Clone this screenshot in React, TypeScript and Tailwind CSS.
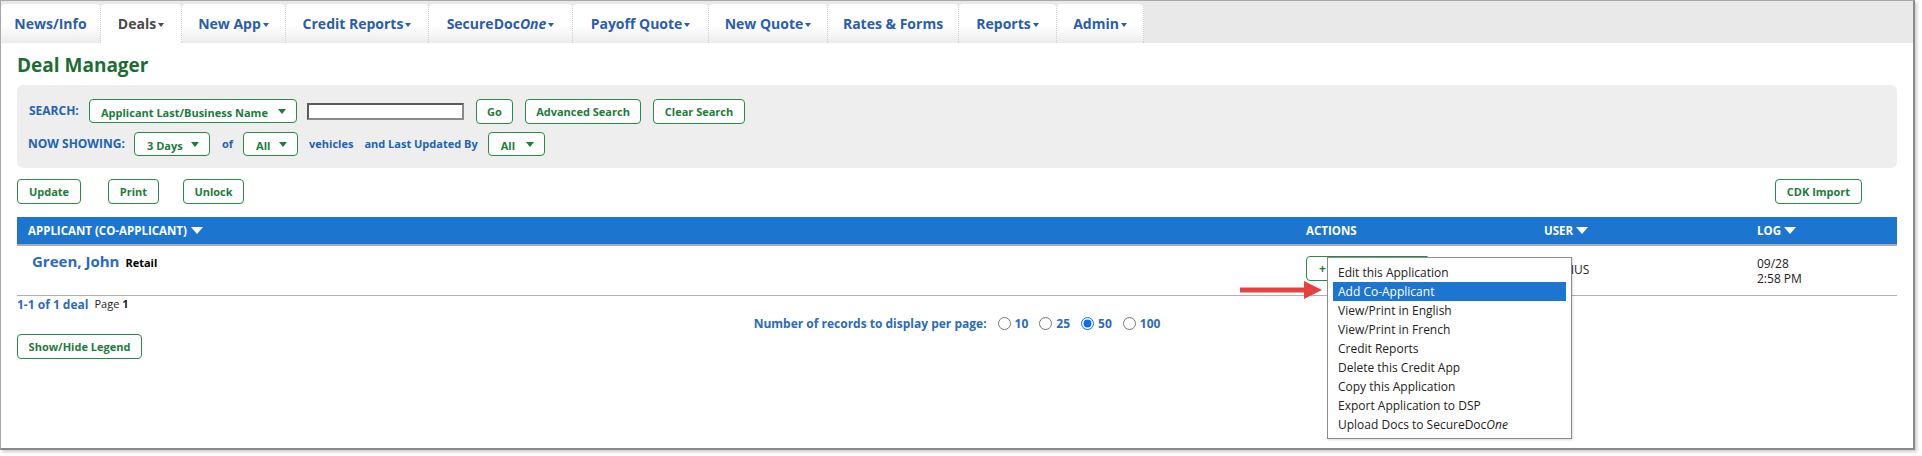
import React from "react";

const tabs: { label: string; w: number; caret?: boolean; active?: boolean; italicTail?: string }[] = [
  { label: "News/Info", w: 100 },
  { label: "Deals", w: 81, caret: true, active: true },
  { label: "New App", w: 104, caret: true },
  { label: "Credit Reports", w: 143, caret: true },
  { label: "SecureDoc", w: 144, caret: true, italicTail: "One" },
  { label: "Payoff Quote", w: 136, caret: true },
  { label: "New Quote", w: 119, caret: true },
  { label: "Rates & Forms", w: 131 },
  { label: "Reports", w: 98, caret: true },
  { label: "Admin", w: 87, caret: true },
];

const menuItems = [
  "Edit this Application",
  "Add Co-Applicant",
  "View/Print in English",
  "View/Print in French",
  "Credit Reports",
  "Delete this Credit App",
  "Copy this Application",
  "Export Application to DSP",
];

function GreenCaret() {
  return (
    <span className="inline-block w-0 h-0 border-l-[4px] border-r-[4px] border-t-[5px] border-l-transparent border-r-transparent border-t-[#1c7c3c]" />
  );
}

function Btn({ children, w, h = 25 }: { children: React.ReactNode; w: number; h?: number }) {
  return (
    <div
      className="flex items-center justify-center border border-[#2a8a48] rounded-[4px] bg-white text-[#1c7c3c] font-bold text-[11px] leading-none"
      style={{ width: w, height: h }}
    >
      {children}
    </div>
  );
}

function Dropdown({ label, w, pl }: { label: string; w: number; pl: number }) {
  return (
    <div
      className="flex items-center justify-between h-[24px] border border-[#2a8a48] rounded-[4px] bg-white text-[#1c7c3c] font-bold text-[11px] leading-none pr-[10px]"
      style={{ width: w, paddingLeft: pl }}
    >
      <span className="pt-[2px]">{label}</span>
      <GreenCaret />
    </div>
  );
}

export default function App() {
  return (
    <div className="w-[1922px] h-[456px] bg-white font-['Open_Sans',sans-serif]">
      <div className="relative w-[1915px] h-[450px] border-l border-t border-[#a8a8a8] border-r-2 border-b-2 border-r-[#8a8a8a] border-b-[#8a8a8a] shadow-[2px_2px_3px_rgba(0,0,0,0.2)] bg-white">
        {/* tab bar */}
        <div className="h-[42px] pt-[3px] flex bg-[#e9e9e9] bg-[radial-gradient(#d6d6d6_0.7px,transparent_0.7px)] bg-[length:2px_2px]">
          {tabs.map((t, i) => (
            <div
              key={i}
              className={
                "h-[39px] flex items-center justify-center rounded-t-[4px] border-r border-dotted border-[#cfcfcf] text-[14px] font-bold " +
                (t.active
                  ? "bg-white text-[#4a4a4a]"
                  : "bg-[linear-gradient(to_bottom,#ffffff_0%,#ffffff_55%,#ececec_100%)] text-[#2a5db0]")
              }
              style={{ width: t.w }}
            >
              <span className="pb-[1px]">
                {t.label}
                {t.italicTail && <i>{t.italicTail}</i>}
              </span>
              {t.caret && (
                <span
                  className={
                    "ml-[2px] mt-[2px] inline-block w-0 h-0 border-l-[3.5px] border-r-[3.5px] border-t-[4px] border-l-transparent border-r-transparent " +
                    (t.active ? "border-t-[#4a4a4a]" : "border-t-[#2a5db0]")
                  }
                />
              )}
            </div>
          ))}
        </div>

        {/* content */}
        <div className="px-[16px]">
          <div className="mt-[10px] h-[24px] text-[19px] leading-[24px] font-bold text-[#1b6e33]">Deal Manager</div>

          {/* search panel */}
          <div className="mt-[8px] h-[83px] bg-[#eeeeee] rounded-[6px] pl-[12px] pt-[13px]">
            <div className="flex items-center h-[26px]">
              <div className="w-[60px] text-[12px] font-bold text-[#2162b5]">SEARCH:</div>
              <Dropdown label="Applicant Last/Business Name" w={208} pl={11} />
              <div className="ml-[10px] w-[157px] h-[17px] border-2 border-[#5a5a5a] border-r-[#8a8a8a] border-b-[#8a8a8a] bg-white" />
              <div className="ml-[12px]">
                <Btn w={37}>Go</Btn>
              </div>
              <div className="ml-[12px]">
                <Btn w={116}>Advanced Search</Btn>
              </div>
              <div className="ml-[12px]">
                <Btn w={92}>Clear Search</Btn>
              </div>
            </div>
            <div className="flex items-center h-[24px] mt-[8px]">
              <div className="w-[106px] -ml-[1px] text-[12px] font-bold text-[#2162b5]">NOW SHOWING:</div>
              <Dropdown label="3 Days" w={76} pl={12} />
              <div className="ml-[12px] text-[11px] font-bold text-[#2162b5]">of</div>
              <div className="ml-[10px]">
                <Dropdown label="All" w={55} pl={12} />
              </div>
              <div className="ml-[11px] text-[11px] font-bold text-[#2162b5]">vehicles</div>
              <div className="ml-[11px] text-[11px] font-bold text-[#2162b5]">and Last Updated By</div>
              <div className="ml-[10px]">
                <Dropdown label="All" w={57} pl={12} />
              </div>
            </div>
          </div>

          {/* buttons */}
          <div className="mt-[11px] flex items-center h-[25px]">
            <Btn w={64}>Update</Btn>
            <div className="ml-[27px]">
              <Btn w={51}>Print</Btn>
            </div>
            <div className="ml-[24px]">
              <Btn w={61}>Unlock</Btn>
            </div>
            <div className="ml-auto mr-[35px]">
              <Btn w={87}>CDK Import</Btn>
            </div>
          </div>

          {/* table header */}
          <div className="mt-[13px] h-[29px] bg-[#1c75cf] border-b-2 border-[#aaaaaa] flex items-center text-white font-bold text-[11.5px]">
            <div className="w-[1289px] pl-[11px] flex items-center">
              <span>APPLICANT (CO-APPLICANT)</span>
              <span className="ml-[4px] inline-block w-0 h-0 border-l-[6px] border-r-[6px] border-t-[7px] border-l-transparent border-r-transparent border-t-white" />
            </div>
            <div className="w-[238px]">ACTIONS</div>
            <div className="w-[213px] flex items-center">
              <span>USER</span>
              <span className="ml-[3px] inline-block w-0 h-0 border-l-[6px] border-r-[6px] border-t-[7px] border-l-transparent border-r-transparent border-t-white" />
            </div>
            <div className="flex items-center">
              <span>LOG</span>
              <span className="ml-[3px] inline-block w-0 h-0 border-l-[6px] border-r-[6px] border-t-[7px] border-l-transparent border-r-transparent border-t-white" />
            </div>
          </div>

          {/* data row */}
          <div className="h-[50px] border-b border-[#b0b0b0] flex">
            <div className="w-[1289px] pl-[15px] pt-[5px] flex items-baseline">
              <span className="text-[15px] leading-[20px] font-bold text-[#2a6bbf]">Green, John</span>
              <span className="ml-[6px] text-[11px] font-bold text-black">Retail</span>
            </div>
            <div className="w-[238px] pt-[10px] relative">
              <div className="w-[124px] h-[25px] border border-[#2a8a48] rounded-[4px] bg-white text-[#1c7c3c] text-[12px] font-bold pl-[12px] leading-[23px]">
                +
              </div>
              <div className="absolute left-[49px] top-[10px] w-[72px] h-0 border-t border-dotted border-[#2a8a48]" />
            </div>
            <div className="w-[213px] pt-[16px] pl-[3px] text-[12px] leading-[16px] text-[#222]">DARIUS</div>
            <div className="pt-[10px] text-[12px] leading-[15px] text-[#222]">
              <div>09/28</div>
              <div>2:58 PM</div>
            </div>
          </div>

          {/* pagination */}
          <div className="h-[17px] flex items-center">
            <span className="text-[12px] font-bold text-[#2a6bbf]">1-1 of 1 deal</span>
            <span className="ml-[6px] text-[11px] text-[#222]">
              Page <b>1</b>
            </span>
          </div>
          <div className="h-[17px] mt-[2px] flex items-center justify-center text-[12px] font-bold text-[#2a6bbf]">
            <span>Number of records to display per page:</span>
            {["10", "25", "50", "100"].map((n) => (
              <label key={n} className="flex items-center ml-[11px]">
                <input
                  type="radio"
                  name="rpp"
                  readOnly
                  checked={n === "50"}
                  className="w-[13px] h-[13px] m-0 accent-[#0a6cf0]"
                />
                <span className="ml-[4px]">{n}</span>
              </label>
            ))}
          </div>
          <div className="mt-[2px]">
            <Btn w={125}>Show/Hide Legend</Btn>
          </div>
        </div>

        {/* red arrow */}
        <svg className="absolute left-[1237px] top-[279px]" width="86" height="20" viewBox="0 0 86 20">
          <rect x="2" y="7.5" width="66" height="5" fill="#e8403f" />
          <polygon points="66,1 84,10 66,19" fill="#e8403f" />
        </svg>

        {/* dropdown menu */}
        <div className="absolute left-[1326px] top-[256px] w-[245px] h-[182px] border border-[#8c8c8c] bg-white px-[5px] pt-[5px] shadow-[1px_1px_2px_rgba(0,0,0,0.15)]">
          {menuItems.map((m, i) => (
            <div
              key={m}
              className={
                "h-[19px] leading-[19px] pl-[5px] text-[12px] " +
                (i === 1 ? "bg-[#1c75cf] text-white" : "text-[#222]")
              }
            >
              {m}
            </div>
          ))}
          <div className="h-[19px] leading-[19px] pl-[5px] text-[12px] text-[#222]">
            Upload Docs to SecureDoc<i>One</i>
          </div>
        </div>
      </div>
    </div>
  );
}
